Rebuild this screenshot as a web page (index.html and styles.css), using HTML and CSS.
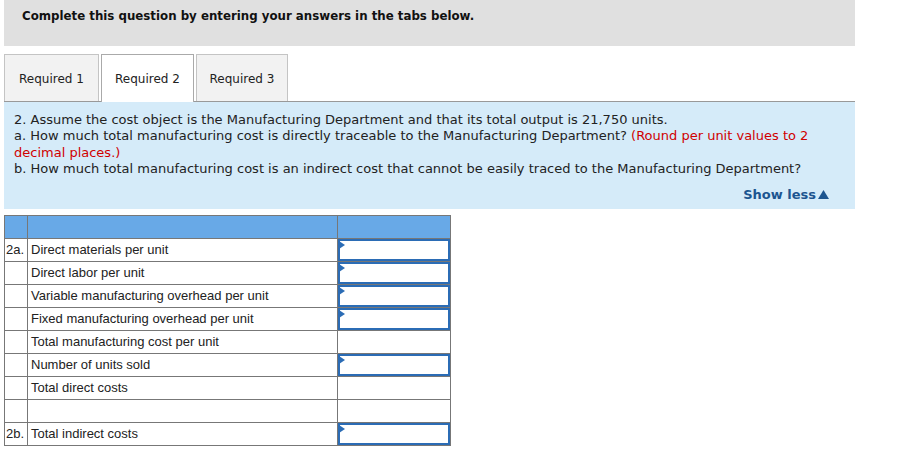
FILE: index.html
```html
<!DOCTYPE html>
<html>
<head>
<meta charset="utf-8">
<link rel="stylesheet" href="styles.css">
</head>
<body>
<div class="page">
  <div class="banner">Complete this question by entering your answers in the tabs below.</div>
  <div class="tabs">
    <div class="tab tab-1">Required 1</div>
    <div class="tab tab-2 active">Required 2</div>
    <div class="tab tab-3">Required 3</div>
  </div>
  <div class="panel">
    <p class="q">2. Assume the cost object is the Manufacturing Department and that its total output is 21,750 units.<br>a. How much total manufacturing cost is directly traceable to the Manufacturing Department? <span class="red">(Round per unit values to 2 decimal places.)</span><br>b. How much total manufacturing cost is an indirect cost that cannot be easily traced to the Manufacturing Department?</p>
    <div class="showless">Show less<svg class="tri" width="11" height="9" viewBox="0 0 11 9"><polygon points="5.5,0 11,9 0,9" fill="#1c5590"/></svg></div>
  </div>
  <table class="grid">
    <colgroup><col class="c1"><col class="c2"><col class="c3"></colgroup>
    <tr class="head"><td></td><td></td><td></td></tr>
    <tr><td class="lbl">2a.</td><td>Direct materials per unit</td><td class="inp"><div class="box"></div></td></tr>
    <tr><td></td><td>Direct labor per unit</td><td class="inp"><div class="box"></div></td></tr>
    <tr><td></td><td>Variable manufacturing overhead per unit</td><td class="inp"><div class="box"></div></td></tr>
    <tr><td></td><td>Fixed manufacturing overhead per unit</td><td class="inp"><div class="box"></div></td></tr>
    <tr><td></td><td>Total manufacturing cost per unit</td><td class="dark"></td></tr>
    <tr><td></td><td>Number of units sold</td><td class="inp"><div class="box"></div></td></tr>
    <tr><td></td><td>Total direct costs</td><td></td></tr>
    <tr><td></td><td></td><td></td></tr>
    <tr><td class="lbl">2b.</td><td>Total indirect costs</td><td class="inp"><div class="box"></div></td></tr>
  </table>
</div>
</body>
</html>
```

FILE: styles.css
```css
html, body {
  margin: 0;
  padding: 0;
  background: #fff;
}
.page {
  margin-left: 4px;
  width: 851px;
  font-family: "DejaVu Sans", Verdana, sans-serif;
  color: #222;
}
.banner {
  height: 46px;
  box-sizing: border-box;
  background: #e0e0e0;
  padding: 8px 0 0 18px;
  font-weight: bold;
  font-size: 11.8px;
  line-height: 16px;
  color: #111;
}
.tabs {
  margin-top: 8px;
  display: flex;
  gap: 2px;
  height: 47px;
  position: relative;
  z-index: 1;
}
.tab {
  box-sizing: border-box;
  height: 47px;
  padding-top: 1px;
  border: 1px solid #c4c4c4;
  border-bottom: none;
  background: #f2f2f2;
  font-size: 12px;
  display: flex;
  align-items: center;
  justify-content: center;
  color: #222;
}
.tab-1 { width: 95px; }
.tab-2 { width: 93px; }
.tab-3 { width: 92px; }
.tab.active {
  background: #fff;
  border-color: #aaa;
  height: 48px;
  padding-top: 0;
}
.panel {
  border-top: 1px solid #999;
  background: #d5ebf9;
  height: 108px;
  box-sizing: border-box;
  padding: 10px 26px 0 10px;
}
.q {
  margin: 0;
  font-size: 13px;
  line-height: 16.4px;
  color: #222;
}
.red { color: #d00000; }
.showless {
  margin-top: 9px;
  text-align: right;
  font-weight: bold;
  font-size: 13px;
  line-height: 16px;
  color: #1c5590;
}
.tri {
  margin-left: 2px;
  vertical-align: 0;
}
.grid {
  margin-top: 6px;
  border-collapse: collapse;
  width: 447px;
  table-layout: fixed;
  font-family: "Liberation Sans", Arial, sans-serif;
  font-size: 13px;
  color: #222;
}
.c1 { width: 23px; }
.c2 { width: 310px; }
.c3 { width: 113px; }
.grid td {
  border: 1px solid #777;
  height: 23px;
  box-sizing: border-box;
  padding: 0 0 2px 3px;
  vertical-align: middle;
  white-space: nowrap;
}
.grid td.lbl { padding-left: 1px; }
.grid tr.head td {
  background: #68a9e7;
}
.grid td.inp {
  padding: 0;
  position: relative;
}
.box {
  position: absolute;
  inset: 0 0 0 0;
  border: 2px solid #2b6cb5;
}
.box::before {
  content: "";
  position: absolute;
  left: -1px;
  top: 0;
  border-left: 6px solid #2b6cb5;
  border-top: 4px solid transparent;
  border-bottom: 4px solid transparent;
}
.grid td.dark {
  border-top: 1px solid #000;
}
```
